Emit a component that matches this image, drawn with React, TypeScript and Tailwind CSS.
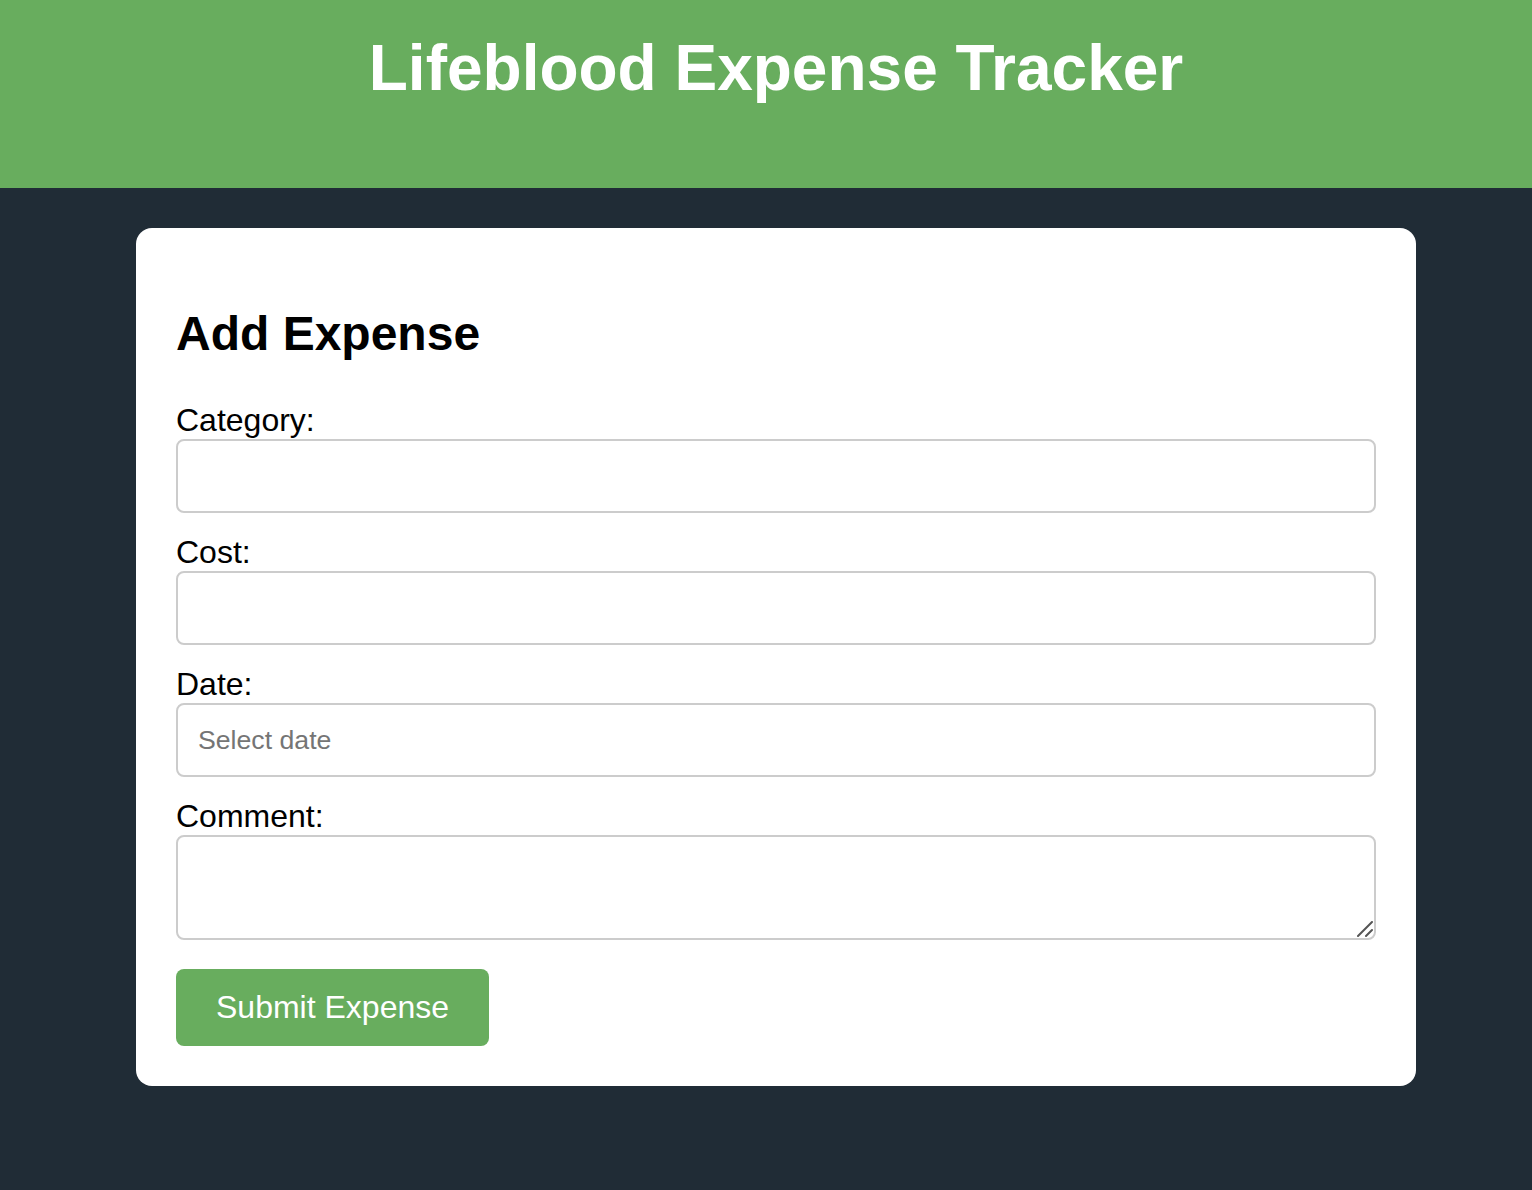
import { useState } from "react";

export default function App() {
  const [category, setCategory] = useState("");
  const [cost, setCost] = useState("");
  const [date, setDate] = useState("");
  const [comment, setComment] = useState("");

  return (
    <div className="min-h-[1190px] bg-[#202c36] font-['Liberation_Sans',Arial,sans-serif]">
      {/* header */}
      <header className="h-[188px] bg-[#68ad5e] pl-[20px] pt-[32px]">
        <h1 className="text-center text-[64px] font-bold leading-[73.6px] text-white">Lifeblood Expense Tracker</h1>
      </header>

      <main className="flex justify-center pl-[20px] pt-[40px]">
        <form
          onSubmit={(e) => e.preventDefault()}
          className="flex w-[1280px] flex-col rounded-[16px] bg-white px-[40px] pb-[40px] pt-[78px]"
        >
          <h2 className="mb-[41px] text-[48px] font-bold leading-[55px] text-black">Add Expense</h2>

          <label className="block text-[32px] leading-[37px] text-black">Category:</label>
          <input
            value={category}
            onChange={(e) => setCategory(e.target.value)}
            className="mb-[21px] h-[74px] w-full rounded-[8px] border-2 border-[#cccccc] px-[20px] text-[26.67px] outline-none"
          />

          <label className="block text-[32px] leading-[37px] text-black">Cost:</label>
          <input
            value={cost}
            onChange={(e) => setCost(e.target.value)}
            className="mb-[21px] h-[74px] w-full rounded-[8px] border-2 border-[#cccccc] px-[20px] text-[26.67px] outline-none"
          />

          <label className="block text-[32px] leading-[37px] text-black">Date:</label>
          <input
            value={date}
            onChange={(e) => setDate(e.target.value)}
            placeholder="Select date"
            className="mb-[21px] h-[74px] w-full rounded-[8px] border-2 border-[#cccccc] px-[20px] text-[26.67px] outline-none placeholder:text-[#757575]"
          />

          <label className="block text-[32px] leading-[37px] text-black">Comment:</label>
          <div className="relative mb-[29px]">
            <textarea
              value={comment}
              onChange={(e) => setComment(e.target.value)}
              className="block h-[105px] w-full resize-none rounded-[8px] border-2 border-[#cccccc] px-[20px] py-[20px] text-[26.67px] outline-none"
            />
            {/* resize grip */}
            <svg className="pointer-events-none absolute bottom-[3px] right-[3px]" width="16" height="16" viewBox="0 0 16 16">
              <path d="M1 15 L15 1 M9 15 L15 9" stroke="#555555" strokeWidth="2" strokeLinecap="round" />
            </svg>
          </div>

          <div>
            <button
              type="submit"
              className="h-[77px] rounded-[8px] bg-[#68ad5e] px-[40px] text-[32px] leading-[37px] text-white"
            >
              Submit Expense
            </button>
          </div>
        </form>
      </main>
    </div>
  );
}
